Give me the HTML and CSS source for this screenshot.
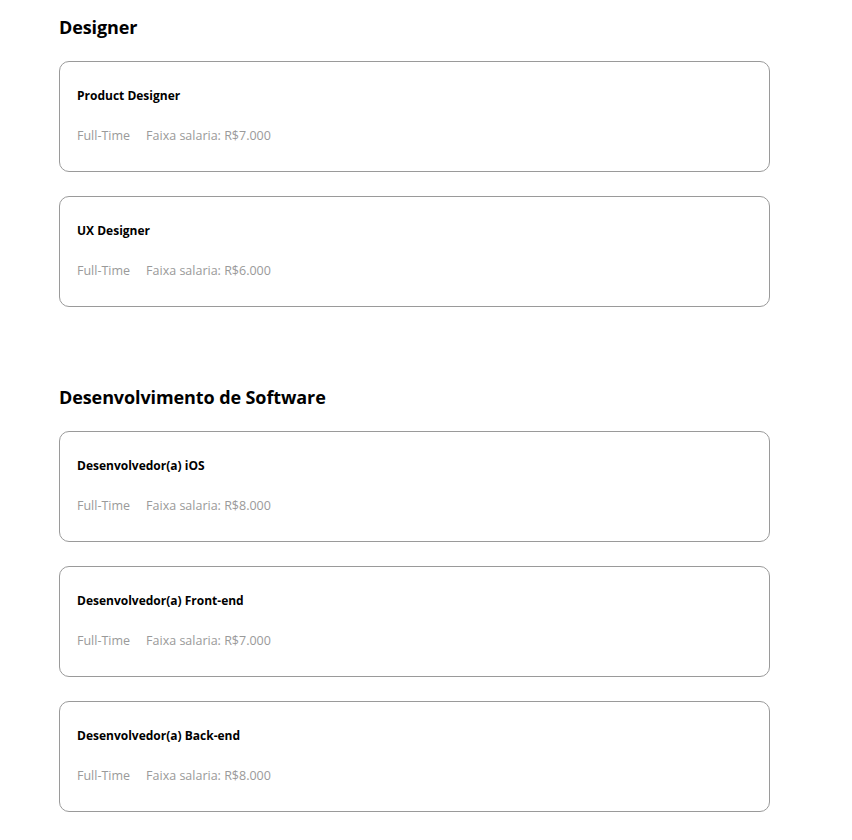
FILE: index.html
```html
<!DOCTYPE html>
<html lang="pt-BR">
<head>
<meta charset="utf-8">
<title>Vagas</title>
<link rel="stylesheet" href="styles.css">
</head>
<body>
<main class="page">
  <section class="group">
    <h2 class="group-title">Designer</h2>
    <div class="jobs">
      <article class="job">
        <h3 class="job-title">Product Designer</h3>
        <div class="job-meta"><span>Full-Time</span><span>Faixa salaria: R$7.000</span></div>
      </article>
      <article class="job">
        <h3 class="job-title">UX Designer</h3>
        <div class="job-meta"><span>Full-Time</span><span>Faixa salaria: R$6.000</span></div>
      </article>
    </div>
  </section>
  <section class="group">
    <h2 class="group-title">Desenvolvimento de Software</h2>
    <div class="jobs">
      <article class="job">
        <h3 class="job-title">Desenvolvedor(a) iOS</h3>
        <div class="job-meta"><span>Full-Time</span><span>Faixa salaria: R$8.000</span></div>
      </article>
      <article class="job">
        <h3 class="job-title">Desenvolvedor(a) Front-end</h3>
        <div class="job-meta"><span>Full-Time</span><span>Faixa salaria: R$7.000</span></div>
      </article>
      <article class="job">
        <h3 class="job-title">Desenvolvedor(a) Back-end</h3>
        <div class="job-meta"><span>Full-Time</span><span>Faixa salaria: R$8.000</span></div>
      </article>
    </div>
  </section>
</main>
</body>
</html>
```
FILE: styles.css
```css
* { box-sizing: border-box; }
html, body { margin: 0; padding: 0; background: #fff; }
body {
  font-family: "Open Sans", "Liberation Sans", sans-serif;
  color: #000;
}
.page {
  padding: 15px 0 40px 59px;
  display: flex;
  flex-direction: column;
  gap: 78px;
}
.group-title {
  margin: 0 0 22px;
  font-size: 18px;
  line-height: 24px;
  font-weight: 700;
  letter-spacing: -0.1px;
}
.jobs {
  display: flex;
  flex-direction: column;
  gap: 24px;
}
.job {
  width: 711px;
  height: 111px;
  border: 1px solid #9a9a9a;
  border-radius: 10px;
  padding: 25px 16px 0 17px;
}
.job-title {
  margin: 0;
  font-size: 12px;
  line-height: 18px;
  font-weight: 700;
}
.job-meta {
  margin-top: 22px;
  display: flex;
  gap: 16px;
  font-size: 12.5px;
  line-height: 18px;
  color: #9a9a9a;
}
```
